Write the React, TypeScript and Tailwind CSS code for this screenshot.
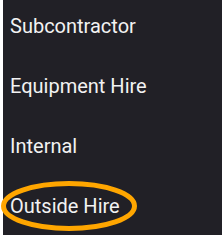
const items = ['Subcontractor', 'Equipment Hire', 'Internal', 'Outside Hire'];

export default function App() {
  return (
    <div className="flex h-[235px] w-[222px] bg-white">
      <div className="relative ml-[3px] flex-1 bg-[#212026] pt-[15px] font-['Roboto',sans-serif] text-[20px] leading-[23px] text-[#f2f2f2]">
        <ul className="flex flex-col gap-[37px]">
          {items.map((item) => (
            <li key={item} className="pl-[7px]">
              {item}
            </li>
          ))}
        </ul>
        <svg className="absolute left-[-3px] top-[180px]" width="146" height="55" viewBox="0 0 146 55" aria-hidden>
          <ellipse cx="69" cy="26" rx="65.5" ry="22.5" fill="none" stroke="#ffa600" strokeWidth="5" />
        </svg>
      </div>
    </div>
  );
}
